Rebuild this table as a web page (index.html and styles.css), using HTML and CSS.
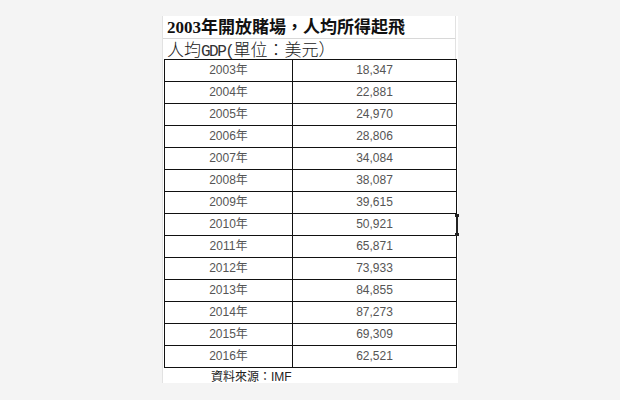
FILE: index.html
```html
<!DOCTYPE html>
<html lang="zh-Hant">
<head>
<meta charset="utf-8">
<link rel="stylesheet" href="styles.css">
</head>
<body>
<div class="panel">
  <div class="title">2003年開放賭場，人均所得起飛</div>
  <div class="subtitle">人均<span class="latin">GDP(</span>單位：美元）</div>
  <table class="data">
    <tr><td>2003年</td><td>18,347</td></tr>
    <tr><td>2004年</td><td>22,881</td></tr>
    <tr><td>2005年</td><td>24,970</td></tr>
    <tr><td>2006年</td><td>28,806</td></tr>
    <tr><td>2007年</td><td>34,084</td></tr>
    <tr><td>2008年</td><td>38,087</td></tr>
    <tr><td>2009年</td><td>39,615</td></tr>
    <tr><td>2010年</td><td>50,921<span class="caret"></span></td></tr>
    <tr><td>2011年</td><td>65,871</td></tr>
    <tr><td>2012年</td><td>73,933</td></tr>
    <tr><td>2013年</td><td>84,855</td></tr>
    <tr><td>2014年</td><td>87,273</td></tr>
    <tr><td>2015年</td><td>69,309</td></tr>
    <tr><td>2016年</td><td>62,521</td></tr>
  </table>
  <div class="source">資料來源：IMF</div>
</div>
</body>
</html>
```

FILE: styles.css
```css
html, body {
  margin: 0;
  padding: 0;
  background: #f4f4f4;
  width: 620px;
  height: 400px;
  overflow: hidden;
}

.panel {
  margin: 16px 0 0 162px;
  width: 296px;
  height: 367px;
  background: #ffffff;
  position: relative;
  box-sizing: border-box;
  border-left: 1px solid #e2e2e2;
}

.title {
  height: 23px;
  border-bottom: 1px solid #d8d8d8;
  border-right: 1px solid #e2e2e2;
  width: 293px;
  padding-left: 4px;
  font-family: "Liberation Serif", "Noto Sans CJK TC", serif;
  font-weight: bold;
  font-size: 17px;
  line-height: 23px;
  color: #111;
  box-sizing: border-box;
}

.subtitle {
  height: 20px;
  padding-left: 4px;
  width: 293px;
  border-right: 1px solid #e2e2e2;
  box-sizing: border-box;
  font-family: "Noto Sans CJK TC", sans-serif;
  font-weight: 300;
  font-size: 17px;
  line-height: 20px;
  color: #222;
}

.subtitle .latin {
  font-family: "Liberation Mono", monospace;
  font-size: 16px;
  letter-spacing: -1.5px;
  font-weight: normal;
  color: #333;
}

.data {
  border-collapse: collapse;
  width: 293px;
  margin-left: 1px;
  font-family: "Liberation Sans", "Noto Sans CJK TC", sans-serif;
  font-size: 12px;
  color: #555;
}

.data td {
  border: 1px solid #111;
  height: 21px;
  padding: 0;
  text-align: center;
  line-height: 21px;
  position: relative;
}

.data td:first-child {
  width: 127px;
}

.caret {
  position: absolute;
  right: -2px;
  top: 0;
  width: 2px;
  height: 22px;
  background: #222;
}

.caret::before,
.caret::after {
  content: "";
  position: absolute;
  left: -1px;
  width: 4px;
  height: 3px;
  background: #222;
}

.caret::before { top: 0; }
.caret::after { bottom: 0; }

.source {
  padding-left: 48px;
  font-family: "Liberation Sans", "Noto Sans CJK TC", sans-serif;
  font-size: 12px;
  line-height: 16px;
  color: #222;
  margin-top: 1px;
}
```
